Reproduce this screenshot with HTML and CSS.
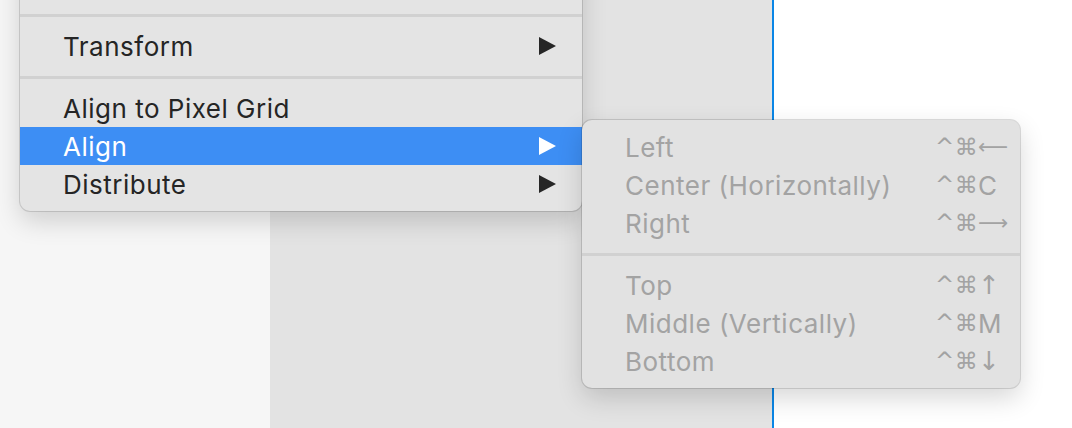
FILE: index.html
```html
<!DOCTYPE html>
<html>
<head>
<meta charset="utf-8">
<link rel="stylesheet" href="styles.css">
</head>
<body>
<div class="stage">
  <div class="col-left"></div>
  <div class="col-mid"></div>
  <div class="col-line"></div>
  <div class="col-right"></div>

  <div class="menu main-menu">
    <div class="row"></div>
    <div class="sep"></div>
    <div class="row"><span class="label">Transform</span><svg class="arrow" viewBox="0 0 17 18"><path d="M0 0 L17 9 L0 18 Z"/></svg></div>
    <div class="sep"></div>
    <div class="row"><span class="label">Align to Pixel Grid</span></div>
    <div class="row active"><span class="label">Align</span><svg class="arrow" viewBox="0 0 17 18"><path d="M0 0 L17 9 L0 18 Z"/></svg></div>
    <div class="row"><span class="label">Distribute</span><svg class="arrow" viewBox="0 0 17 18"><path d="M0 0 L17 9 L0 18 Z"/></svg></div>
  </div>

  <div class="menu sub-menu">
    <div class="row disabled"><span class="label">Left</span><span class="keys"><span class="mods">^⌘</span><span class="key long">⟵</span></span></div>
    <div class="row disabled"><span class="label">Center (Horizontally)</span><span class="keys"><span class="mods">^⌘</span><span class="key">C</span></span></div>
    <div class="row disabled"><span class="label">Right</span><span class="keys"><span class="mods">^⌘</span><span class="key long">⟶</span></span></div>
    <div class="sep"></div>
    <div class="row disabled"><span class="label">Top</span><span class="keys"><span class="mods">^⌘</span><span class="key narrow">↑</span></span></div>
    <div class="row disabled"><span class="label">Middle (Vertically)</span><span class="keys"><span class="mods">^⌘</span><span class="key">M</span></span></div>
    <div class="row disabled"><span class="label">Bottom</span><span class="keys"><span class="mods">^⌘</span><span class="key narrow">↓</span></span></div>
  </div>
</div>
</body>
</html>
```

FILE: styles.css
```css
html, body {
  margin: 0;
  padding: 0;
}
body {
  width: 1072px;
  height: 428px;
  overflow: hidden;
  font-family: "Inter", "Noto Sans", "DejaVu Sans", sans-serif;
}
.stage {
  position: relative;
  display: flex;
  width: 1072px;
  height: 428px;
}
.col-left {
  width: 270px;
  background: #f6f6f6;
}
.col-mid {
  width: 502px;
  background: #e3e3e3;
}
.col-line {
  width: 2px;
  background: #0a86e6;
}
.col-right {
  flex: 1;
  background: #ffffff;
}
.menu {
  position: absolute;
  box-sizing: border-box;
  padding: 8px 0;
  border-radius: 10px;
  background: #e4e4e4;
  box-shadow: 0 0 0 1px rgba(0,0,0,0.13), 0 10px 26px rgba(0,0,0,0.16);
}
.main-menu {
  left: 20px;
  top: -43px;
  width: 562px;
}
.sub-menu {
  left: 582px;
  top: 120px;
  width: 438px;
  background: #e2e2e2;
}
.row {
  display: flex;
  align-items: center;
  height: 38px;
  padding: 0 26px 0 43px;
  font-size: 26px;
  color: #252525;
  letter-spacing: 0.5px;
}
.row .label {
  flex: 1;
  padding-top: 1px;
}
.row.active {
  background: #3d8ef4;
  color: #ffffff;
}
.arrow {
  width: 17px;
  height: 18px;
  fill: #262626;
}
.row.active .arrow {
  fill: #ffffff;
}
.sep {
  height: 24px;
  display: flex;
  align-items: center;
}
.sep::before {
  content: "";
  display: block;
  width: 100%;
  height: 3px;
  background: #d1d1d1;
}
.sub-menu .row {
  padding-right: 14px;
}
.row.disabled {
  color: #a3a3a3;
}
.keys {
  display: flex;
  align-items: center;
}
.mods {
  font-family: "DejaVu Sans", sans-serif;
  font-size: 23px;
  width: 43px;
  letter-spacing: 0.5px;
  white-space: nowrap;
}
.key {
  width: 28px;
  text-align: left;
  font-family: "Inter", "DejaVu Sans", sans-serif;
  letter-spacing: 0;
}
.key.long {
  font-family: "DejaVu Sans", sans-serif;
  font-size: 21px;
  white-space: nowrap;
}
.key.narrow {
  text-align: center;
  padding-right: 10px;
  box-sizing: border-box;
  font-family: "DejaVu Sans", sans-serif;
}
```
